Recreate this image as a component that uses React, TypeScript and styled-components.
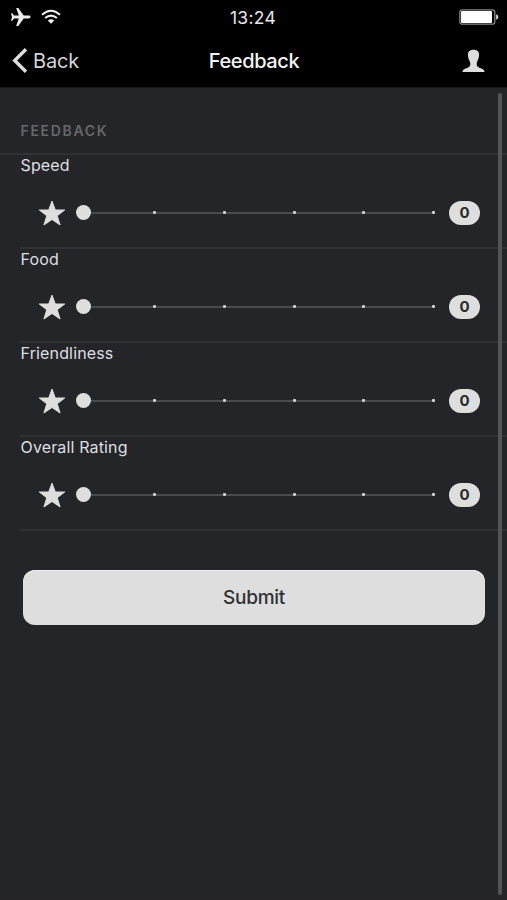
import React from "react";
import styled, { createGlobalStyle } from "styled-components";

const Global = createGlobalStyle`
  * { box-sizing: border-box; }
  body { margin: 0; background: #242529; font-family: Inter, "Liberation Sans", sans-serif; }
`;

const Screen = styled.div`
  position: relative;
  width: 507px;
  height: 900px;
  overflow: hidden;
  background: #242529;
  color: #dedfe0;
  border-bottom: 1px solid #2b1f2a;
`;

const Header = styled.header`
  height: 88px;
  background: #000;
  border-bottom: 1px solid #17181a;
`;

const StatusBar = styled.div`
  display: grid;
  grid-template-columns: 1fr auto 1fr;
  align-items: center;
  height: 34px;
  padding: 0 8px 0 10px;
`;

const StatusIcons = styled.div`
  display: flex;
  align-items: center;
  gap: 10px;
`;

const Clock = styled.time`
  margin-right: 3px;
  padding-top: 1px;
  font-size: 17.5px;
  line-height: 33px;
  letter-spacing: 0.3px;
  color: #e6e6e6;
`;

const BatterySlot = styled.div`
  display: flex;
  justify-content: flex-end;
`;

const NavBar = styled.nav`
  display: grid;
  grid-template-columns: 1fr auto 1fr;
  align-items: center;
  height: 54px;
  padding: 0 22px 0 12px;
`;

const BackButton = styled.button`
  display: flex;
  align-items: center;
  gap: 5px;
  padding: 0;
  border: 0;
  background: none;
  color: #d6d6d6;
  font: 400 20px/24px Inter, sans-serif;
  letter-spacing: -0.2px;
`;

const Title = styled.h1`
  margin: 0 0 0 11px;
  font-size: 20px;
  line-height: 24px;
  font-weight: 550;
  letter-spacing: -0.4px;
  color: #f4f4f4;
`;

const ProfileButton = styled.button`
  display: flex;
  justify-self: end;
  padding: 0;
  border: 0;
  background: none;
`;

const SectionHeading = styled.h2`
  height: 67px;
  margin: 0;
  padding: 33px 20.5px 0;
  border-bottom: 2px solid #303135;
  font-size: 14px;
  line-height: 20px;
  font-weight: 600;
  letter-spacing: 1.7px;
  color: #66676a;
`;

const RatingRow = styled.section`
  height: 94px;
  margin-left: 20px;
  border-bottom: 2px solid #303135;
`;

const RatingLabel = styled.div`
  height: 20px;
  padding-left: 0.5px;
  font-size: 16px;
  line-height: 20px;
  letter-spacing: 0.15px;
`;

const RatingControl = styled.div`
  display: flex;
  align-items: center;
  height: 72px;
  padding: 3px 27px 0 18px;
`;

const Track = styled.div`
  display: flex;
  align-items: center;
  width: 359px;
  height: 16px;
  margin: 0 14px 0 10px;
`;

const Thumb = styled.span`
  flex: none;
  width: 15px;
  height: 15px;
  border-radius: 50%;
  background: #dedede;
`;

const Segment = styled.span<{ $first: boolean }>`
  flex: ${({ $first }) => ($first ? "0 0 62px" : "1")};
  height: 2px;
  background: #494a4d;
`;

const Tick = styled.span`
  flex: none;
  width: 3px;
  height: 3px;
  border-radius: 1px;
  background: #d0d0d0;
`;

const Badge = styled.span`
  flex: none;
  width: 31px;
  height: 24px;
  margin-top: 1px;
  border-radius: 12px;
  background: #dedede;
  color: #28292c;
  font-size: 15px;
  line-height: 24px;
  font-weight: 650;
  text-align: center;
`;

const SubmitButton = styled.button`
  display: block;
  width: 462px;
  height: 55px;
  margin: 39px 0 0 23px;
  padding: 1px 0 0;
  border: 0;
  border-radius: 12px;
  background: #dedede;
  box-shadow: inset 0 1px 0 #efefef;
  color: #303134;
  font: 450 19px/54px Inter, sans-serif;
  letter-spacing: -0.3px;
`;

const ScrollIndicator = styled.div`
  position: absolute;
  top: 93px;
  right: 5px;
  width: 4px;
  height: 802px;
  border-radius: 2px;
  background: #535457;
`;

const Airplane = () => (
  <svg width="21" height="20" viewBox="0 0 21 20" fill="#ededed">
    <path d="M20.5 10c0-.9-.8-1.4-2.1-1.4h-4.7L8.3 1H6.2l2.6 7.6H4L2.4 6.2H1L2 10l-1 3.8h1.4L4 11.4h4.8L6.2 19h2.1l5.4-7.6h4.7c1.3 0 2.1-.5 2.1-1.4Z" />
  </svg>
);

const Wifi = () => (
  <svg width="20" height="16" viewBox="0 0 20 16" fill="none" stroke="#ededed" strokeWidth="2">
    <path d="M1 5.8Q10-2.2 19 5.8M4.1 9.1q5.9-5 11.8 0" />
    <path d="m10 14.8-3.2-3.3q3.2-2.7 6.4 0Z" fill="#ededed" stroke="none" />
  </svg>
);

const Battery = () => (
  <svg width="40" height="16" viewBox="0 0 40 16">
    <rect x=".8" y=".8" width="35" height="14.4" rx="2.5" fill="none" stroke="#858585" strokeWidth="1.3" />
    <rect x="2" y="2" width="31" height="12" rx="1" fill="#fff" />
    <path d="M37.2 5.3q2.1.5 2.1 2.7t-2.1 2.7Z" fill="#ddd" />
  </svg>
);

const Chevron = () => (
  <svg width="16" height="26" viewBox="0 0 16 26" fill="none" stroke="#dedede" strokeWidth="3.4">
    <path d="M14 1.2 2.7 12.5 14 23.8" />
  </svg>
);

const Person = () => (
  <svg width="23" height="24" viewBox="0 0 23 24" fill="#dedede">
    <path d="M11.5.7c4.3 0 5.9 2.3 5.5 6-.2 2.2-.7 3.7-1.5 5-.6 1.2-.8 2.1-.8 3.4 0 2.1.6 2.9 2.6 3.7 3 1.1 5 1.6 5.3 4.2H.4c.3-2.6 2.3-3.1 5.3-4.2 2-.8 2.6-1.6 2.6-3.7 0-1.3-.2-2.2-.8-3.4-.8-1.3-1.3-2.8-1.5-5C5.6 3 7.2.7 11.5.7Z" />
  </svg>
);

const Star = () => (
  <svg width="28" height="28" viewBox="0 0 28 28" fill="#dedede" stroke="#dedede" strokeWidth="1" strokeLinejoin="round">
    <path d="m14 2.1 3.3 8.9h9.4l-7.5 5.8 2.9 9.2-8.1-5.5L5.9 26l2.9-9.2L1.3 11h9.4Z" />
  </svg>
);

const categories = ["Speed", "Food", "Friendliness", "Overall Rating"];

export default function App() {
  return (
    <>
      <Global />
      <Screen>
        <Header>
          <StatusBar>
            <StatusIcons><Airplane /><Wifi /></StatusIcons>
            <Clock>13:24</Clock>
            <BatterySlot><Battery /></BatterySlot>
          </StatusBar>
          <NavBar>
            <BackButton><Chevron />Back</BackButton>
            <Title>Feedback</Title>
            <ProfileButton aria-label="Profile"><Person /></ProfileButton>
          </NavBar>
        </Header>
        <main>
          <SectionHeading>FEEDBACK</SectionHeading>
          {categories.map((category) => (
            <RatingRow key={category}>
              <RatingLabel>{category}</RatingLabel>
              <RatingControl>
                <Star />
                <Track>
                  <Thumb />
                  {[1, 2, 3, 4, 5].map((step) => (
                    <React.Fragment key={step}><Segment $first={step === 1} /><Tick /></React.Fragment>
                  ))}
                </Track>
                <Badge>0</Badge>
              </RatingControl>
            </RatingRow>
          ))}
          <SubmitButton>Submit</SubmitButton>
        </main>
        <ScrollIndicator />
      </Screen>
    </>
  );
}
